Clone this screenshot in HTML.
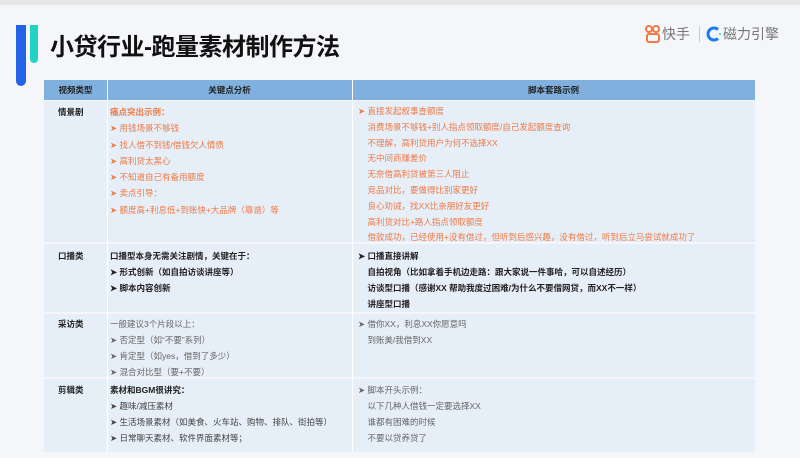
<!DOCTYPE html>
<html><head><meta charset="utf-8"><style>
*{margin:0;padding:0;box-sizing:border-box}
body{width:800px;height:458px;overflow:hidden;background:#f4f6fa;font-family:"Liberation Sans","Noto Sans CJK SC",sans-serif;position:relative}
.a{position:absolute;white-space:nowrap}
.t{font-size:8.5px;line-height:16px}
.o{color:#ee7a45}
.k{color:#222;font-weight:bold}
.g{color:#666}
.cell{position:absolute;background:#e6eef8}
</style></head><body>
<div class="a" style="left:0;top:0;width:800px;height:5px;background:#e6e6e6"></div>
<div class="a" style="left:16px;top:25px;width:10px;height:61px;background:#2563e6;border-radius:0 0 5px 5px"></div>
<div class="a" style="left:30px;top:25px;width:8px;height:38px;background:#22d3c5;border-radius:0 0 4px 4px"></div>
<div class="a" style="left:50px;top:27px;font-size:24px;font-weight:bold;color:#111;letter-spacing:-0.5px">小贷行业-跑量素材制作方法</div>
<svg class="a" style="left:645px;top:25px" width="16" height="18" viewBox="0 0 16 18"><circle cx="4" cy="4" r="3" fill="none" stroke="#ee7a45" stroke-width="2"/><circle cx="11" cy="4" r="3" fill="none" stroke="#ee7a45" stroke-width="2"/><rect x="2" y="9" width="12" height="8" rx="2" fill="none" stroke="#ee7a45" stroke-width="2"/></svg>
<div class="a" style="left:662px;top:24px;font-size:14px;color:#777">快手</div>
<div class="a" style="left:699px;top:26px;width:1px;height:16px;background:#ccc"></div>
<svg class="a" style="left:706px;top:26px" width="16" height="16" viewBox="0 0 16 16"><path d="M12 3.5A6 6 0 1 0 12 12.5" fill="none" stroke="#1a7cf0" stroke-width="3"/><circle cx="14" cy="8" r="1" fill="#22d3c5"/></svg>
<div class="a" style="left:723px;top:24px;font-size:14px;color:#777">磁力引擎</div>
<!-- header -->
<div class="a" style="left:44px;top:80px;width:711px;height:20px;background:#7fb0de"></div>
<div class="a k" style="left:44px;top:80px;width:63px;text-align:center;font-size:8.5px;line-height:20px">视频类型</div>
<div class="a k" style="left:107px;top:80px;width:245px;text-align:center;font-size:8.5px;line-height:20px">关键点分析</div>
<div class="a k" style="left:352px;top:80px;width:403px;text-align:center;font-size:8.5px;line-height:20px">脚本套路示例</div>
<div class="cell" style="left:44px;top:101px;width:711px;height:141px"></div>
<div class="cell" style="left:44px;top:244px;width:711px;height:68px"></div>
<div class="cell" style="left:44px;top:314px;width:711px;height:63px"></div>
<div class="cell" style="left:44px;top:379px;width:711px;height:73px"></div>
<div class="a" style="left:107px;top:80px;width:1px;height:372px;background:#fff"></div>
<div class="a" style="left:352px;top:80px;width:1px;height:372px;background:#fff"></div>
<!-- row1 -->
<div class="a k t" style="left:58px;top:104px">情景剧</div>
<div class="a t o" style="left:110px;top:104px;line-height:16.3px"><b>痛点突出示例：</b><br>➤ 用钱场景不够钱<br>➤ 找人借不到钱/借钱欠人情债<br>➤ 高利贷太黑心<br>➤ 不知道自己有备用额度<br>➤ 卖点引导：<br>➤ 额度高+利息低+到账快+大品牌（靠谱）等</div>
<div class="a t o" style="left:358px;top:104px;line-height:15.8px">➤ 直接发起叙事查额度<br>&nbsp;&nbsp;&nbsp;&nbsp;消费场景不够钱+别人指点领取额度/自己发起额度查询<br>&nbsp;&nbsp;&nbsp;&nbsp;不理解，高利贷用户为何不选择XX<br>&nbsp;&nbsp;&nbsp;&nbsp;无中间商赚差价<br>&nbsp;&nbsp;&nbsp;&nbsp;无奈借高利贷被第三人阻止<br>&nbsp;&nbsp;&nbsp;&nbsp;竞品对比，要做得比别家更好<br>&nbsp;&nbsp;&nbsp;&nbsp;良心劝诫，找XX比亲朋好友更好<br>&nbsp;&nbsp;&nbsp;&nbsp;高利贷对比+路人指点领取额度<br>&nbsp;&nbsp;&nbsp;&nbsp;借款成功，已经使用+没有借过，但听到后感兴趣，没有借过，听到后立马尝试就成功了</div>
<!-- row2 -->
<div class="a k t" style="left:58px;top:248px">口播类</div>
<div class="a k t" style="left:110px;top:248px">口播型本身无需关注剧情，关键在于：<br>➤ 形式创新（如自拍访谈讲座等）<br>➤ 脚本内容创新</div>
<div class="a k t" style="left:358px;top:248px">➤ 口播直接讲解<br>&nbsp;&nbsp;&nbsp;&nbsp;自拍视角（比如拿着手机边走路：跟大家说一件事哈，可以自述经历）<br>&nbsp;&nbsp;&nbsp;&nbsp;访谈型口播（感谢XX 帮助我度过困难/为什么不要借网贷，而XX不一样）<br>&nbsp;&nbsp;&nbsp;&nbsp;讲座型口播</div>
<!-- row3 -->
<div class="a k t" style="left:58px;top:316px">采访类</div>
<div class="a g t" style="left:110px;top:316px">一般建议3个片段以上：<br>➤ 否定型（如“不要”系列）<br>➤ 肯定型（如yes，借到了多少）<br>➤ 混合对比型（要+不要）</div>
<div class="a g t" style="left:358px;top:316px">➤ 借你XX，利息XX你愿意吗<br>&nbsp;&nbsp;&nbsp;&nbsp;到账美/我借到XX</div>
<!-- row4 -->
<div class="a k t" style="left:58px;top:382px">剪辑类</div>
<div class="a t" style="left:110px;top:382px;color:#444"><b style="color:#222">素材和BGM很讲究：</b><br>➤ 趣味/减压素材<br>➤ 生活场景素材（如美食、火车站、购物、排队、街拍等）<br>➤ 日常聊天素材、软件界面素材等；</div>
<div class="a g t" style="left:358px;top:382px">➤ 脚本开头示例：<br>&nbsp;&nbsp;&nbsp;&nbsp;以下几种人借钱一定要选择XX<br>&nbsp;&nbsp;&nbsp;&nbsp;谁都有困难的时候<br>&nbsp;&nbsp;&nbsp;&nbsp;不要以贷养贷了</div>
</body></html>
